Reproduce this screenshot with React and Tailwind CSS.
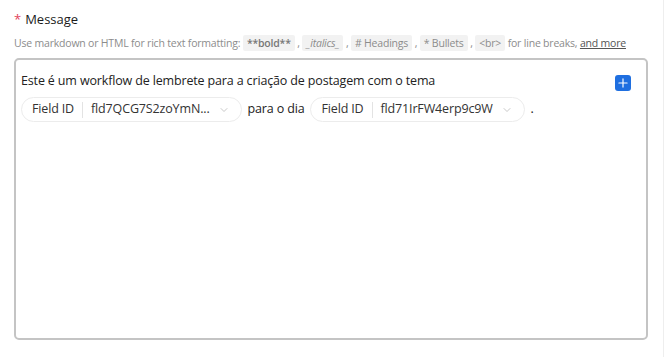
import React from "react";
import { ChevronDown, Plus } from "lucide-react";

function Code({ children, italic }) {
  return (
    <span className={`rounded-[2px] bg-[#f2f2f2] px-[4px] py-[1px] text-[#8c8c8c] ${italic ? "italic" : ""}`}>
      {children}
    </span>
  );
}

function FieldPill({ value }) {
  return (
    <span className="inline-flex h-[25px] items-center rounded-full border border-[#ececec] bg-white pl-[10px] pr-[11px] text-[12.5px] tracking-[-0.15px] text-[#333]">
      <span>Field ID</span>
      <span className="mx-[8px] h-[16px] w-px bg-[#e3e3e3]" />
      <span>{value}</span>
      <ChevronDown className="ml-[8px] h-[12px] w-[12px] text-[#b5b5b5]" strokeWidth={1.5} />
    </span>
  );
}

export default function App() {
  return (
    <div
      className="h-[357px] w-[664px] border-r border-[#eeeeee] bg-white pl-[14px] pr-[16px] pt-[10px]"
      style={{ fontFamily: '"Open Sans", "Noto Sans", sans-serif' }}
    >
      <div className="flex items-center text-[13px] text-[#1a1a1a]">
        <span className="mr-[4px] text-[#e2445c]">*</span>
        <span className="font-medium">Message</span>
      </div>
      <div className="mt-[6px] whitespace-nowrap text-[10.5px] tracking-[-0.2px] text-[#8c8c8c]">
        Use markdown or HTML for rich text formatting: <Code><b className="font-semibold text-[#777]">**bold**</b></Code> ,{" "}
        <Code italic>_italics_</Code> , <Code># Headings</Code> , <Code>* Bullets</Code> , <Code>&lt;br&gt;</Code> for line breaks,{" "}
        <a className="text-[#555] underline">and more</a>
      </div>
      <div className="mt-[7px] h-[282px] w-[634px] rounded-[5px] border-2 border-[#c4c4c4] px-[5px] pt-[12px]">
        <div className="flex items-start justify-between">
          <span className="text-[12.5px] tracking-[-0.15px] text-[#222]">Este é um workflow de lembrete para a criação de postagem com o tema</span>
          <span className="mr-[10px] mt-[3px] flex h-[16px] w-[16px] items-center justify-center rounded-[3px] bg-[#1f6fe0]">
            <Plus className="h-[14px] w-[14px] text-white" strokeWidth={2} />
          </span>
        </div>
        <div className="mt-[6px] flex items-center gap-[6px] text-[12.5px] tracking-[-0.15px] text-[#222]">
          <FieldPill value="fld7QCG7S2zoYmN..." />
          <span>para o dia</span>
          <FieldPill value="fld71IrFW4erp9c9W" />
          <span>.</span>
        </div>
      </div>
    </div>
  );
}
